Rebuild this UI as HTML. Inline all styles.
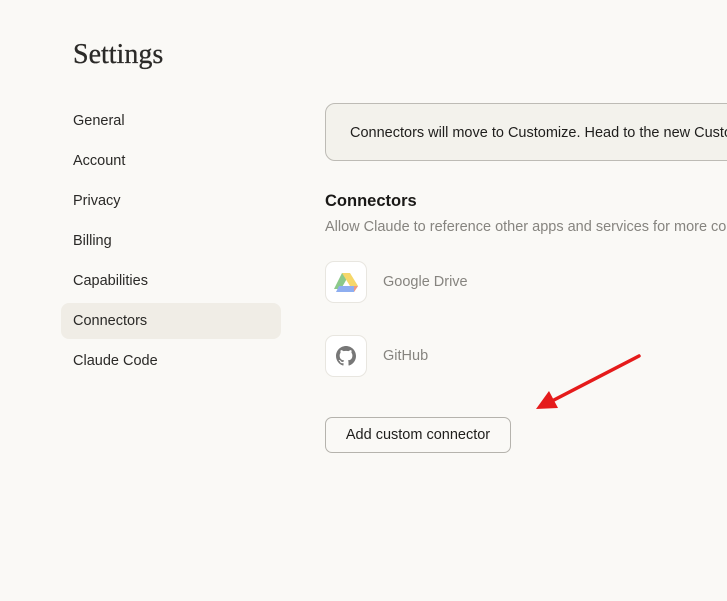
<!DOCTYPE html>
<html><head><meta charset="utf-8"><style>
*{margin:0;padding:0;box-sizing:border-box}
html,body{width:727px;height:601px;overflow:hidden;background:#faf9f6;font-family:"Liberation Sans",sans-serif}
.wrap{position:absolute;left:0;top:0;width:727px;height:601px;overflow:hidden}
.abs{position:absolute;white-space:nowrap}
h1{position:absolute;left:73px;top:39px;font-family:"Liberation Serif",serif;font-weight:normal;font-size:28px;color:#2b2a28;-webkit-text-stroke:0.3px #2b2a28}
.nav{position:absolute;left:73px;font-size:14.5px;color:#2a2927}
.sel{position:absolute;left:61px;top:303px;width:220px;height:36px;background:#f0ede6;border-radius:8px}
.notice{position:absolute;left:325px;top:103px;width:430px;height:58px;border:1px solid #bdbbb5;border-radius:10px;background:#f3f2ec}
.icon{position:absolute;left:325px;width:42px;height:42px;border:1px solid #e8e6e0;border-radius:9px;background:#fff}
.btn{position:absolute;left:325px;top:417px;width:186px;height:36px;border:1px solid #b5b3ad;border-radius:7px;font-size:14.5px;color:#1f1e1c;text-align:center;line-height:34px}
</style></head><body><div class="wrap">
<h1>Settings</h1>
<div class="sel"></div>
<div class="nav" style="top:113px">General</div>
<div class="nav" style="top:153px">Account</div>
<div class="nav" style="top:193px">Privacy</div>
<div class="nav" style="top:233px">Billing</div>
<div class="nav" style="top:273px">Capabilities</div>
<div class="nav" style="top:313px">Connectors</div>
<div class="nav" style="top:353px">Claude Code</div>
<div class="notice"></div>
<div class="abs" style="left:350px;top:125px;font-size:14.5px;color:#1f1e1c">Connectors will move to Customize. Head to the new Customize page</div>
<div class="abs" style="left:325px;top:192px;font-size:16.5px;font-weight:bold;color:#1a1917">Connectors</div>
<div class="abs" style="left:325px;top:219px;font-size:14.5px;color:#86847f">Allow Claude to reference other apps and services for more context.</div>
<div class="icon" style="top:261px"><svg width="42" height="42" viewBox="0 0 42 42" style="position:absolute;left:-1px;top:-1px">
<polygon points="17,12 25,12 20,21 16,28 9,28" fill="#8cc98a"/>
<polygon points="17,12 25,12 33,25 25,25" fill="#f6d76a"/>
<polygon points="14,25 33,25 29,31 11,31" fill="#8eaef0"/>
<polygon points="29,25 33,25 29,31" fill="#f19a80"/>
</svg></div>
<div class="abs" style="left:383px;top:274px;font-size:14.5px;color:#86847f">Google Drive</div>
<div class="icon" style="top:335px"><svg width="20" height="20" viewBox="0 0 16 16" style="position:absolute;left:10px;top:10px"><path fill="#777" d="M8 0C3.58 0 0 3.58 0 8c0 3.540 2.29 6.53 5.47 7.59.4.07.55-.17.55-.38 0-.19-.01-.82-.01-1.49-2.010.37-2.53-.49-2.69-.94-.09-.23-.48-.94-.82-1.13-.28-.15-.68-.52-.01-.53.63-.01 1.08.58 1.23.82.72 1.21 1.87.87 2.33.66.07-.52.28-.87.51-1.07-1.78-.2-3.64-.89-3.64-3.95 0-.87.31-1.59.82-2.15-.08-.2-.36-1.02.08-2.12 0 0 .67-.21 2.2.82.64-.18 1.32-.27 2-.27.68 0 1.36.09 2 .27 1.53-1.04 2.2-.82 2.2-.82.44 1.1.16 1.92.08 2.12.51.56.82 1.27.82 2.15 0 3.07-1.87 3.75-3.65 3.95.29.25.54.73.54 1.48 0 1.07-.01 1.93-.01 2.2 0 .21.15.46.55.38A8.013 8.013 0 0016 8c0-4.42-3.58-8-8-8z"/></svg></div>
<div class="abs" style="left:383px;top:348px;font-size:14.5px;color:#86847f">GitHub</div>
<div class="btn">Add custom connector</div>
<svg width="727" height="601" style="position:absolute;left:0;top:0">
<line x1="639" y1="356" x2="552" y2="401" stroke="#e51b1b" stroke-width="3.5" stroke-linecap="round"/>
<polygon points="536,409 549,391 558,408" fill="#e51b1b"/>
</svg>
</div></body></html>
